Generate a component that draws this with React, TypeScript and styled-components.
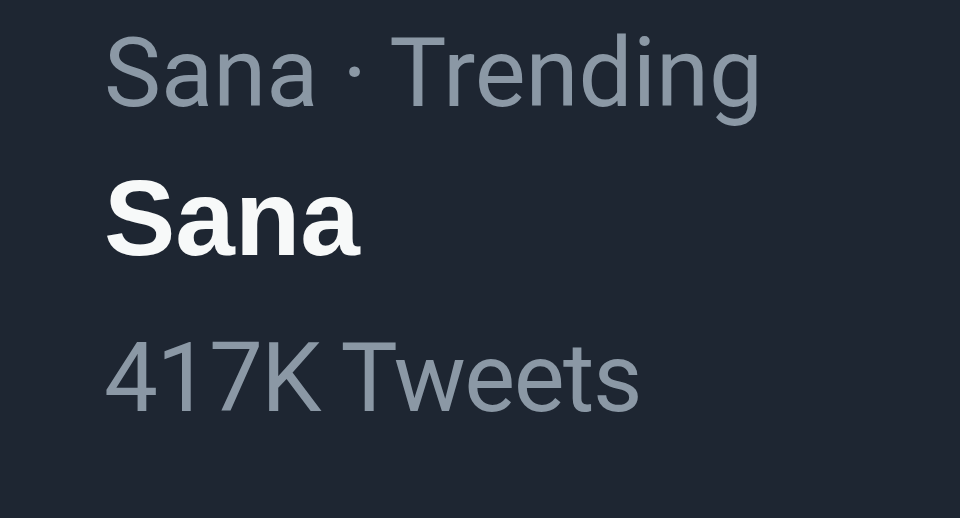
import React from "react";
import styled, {createGlobalStyle} from "styled-components";

const GlobalStyle = createGlobalStyle`
  html, body {
    margin: 0;
    padding: 0;
    background: #1e2632;
  }
`

const Card = styled.div`
  width: 960px;
  height: 518px;
  box-sizing: border-box;
  padding: 0 0 0 104px;
  background: #1e2632;
  font-family: Roboto, "Noto Sans", sans-serif;
  display: flex;
  flex-direction: column;
  overflow: hidden;
`

const Meta = styled.div`
  font-size: 96px;
  line-height: 146px;
  color: #8b98a5;
  white-space: nowrap;
`

const Title = styled.div`
  font-family: "Liberation Sans", Arial, sans-serif;
  font-size: 107px;
  font-weight: 700;
  line-height: 144px;
  color: #f7f9f9;
  white-space: nowrap;
`

const Count = styled(Meta)`
  margin-top: 32px;
  line-height: 112px;
  letter-spacing: -1.5px;
`

const App: React.FC = () => {
  return (
    <>
      <GlobalStyle/>
      <Card>
        <Meta>Sana · Trending</Meta>
        <Title>Sana</Title>
        <Count>417K Tweets</Count>
      </Card>
    </>
  )
}

export default App
